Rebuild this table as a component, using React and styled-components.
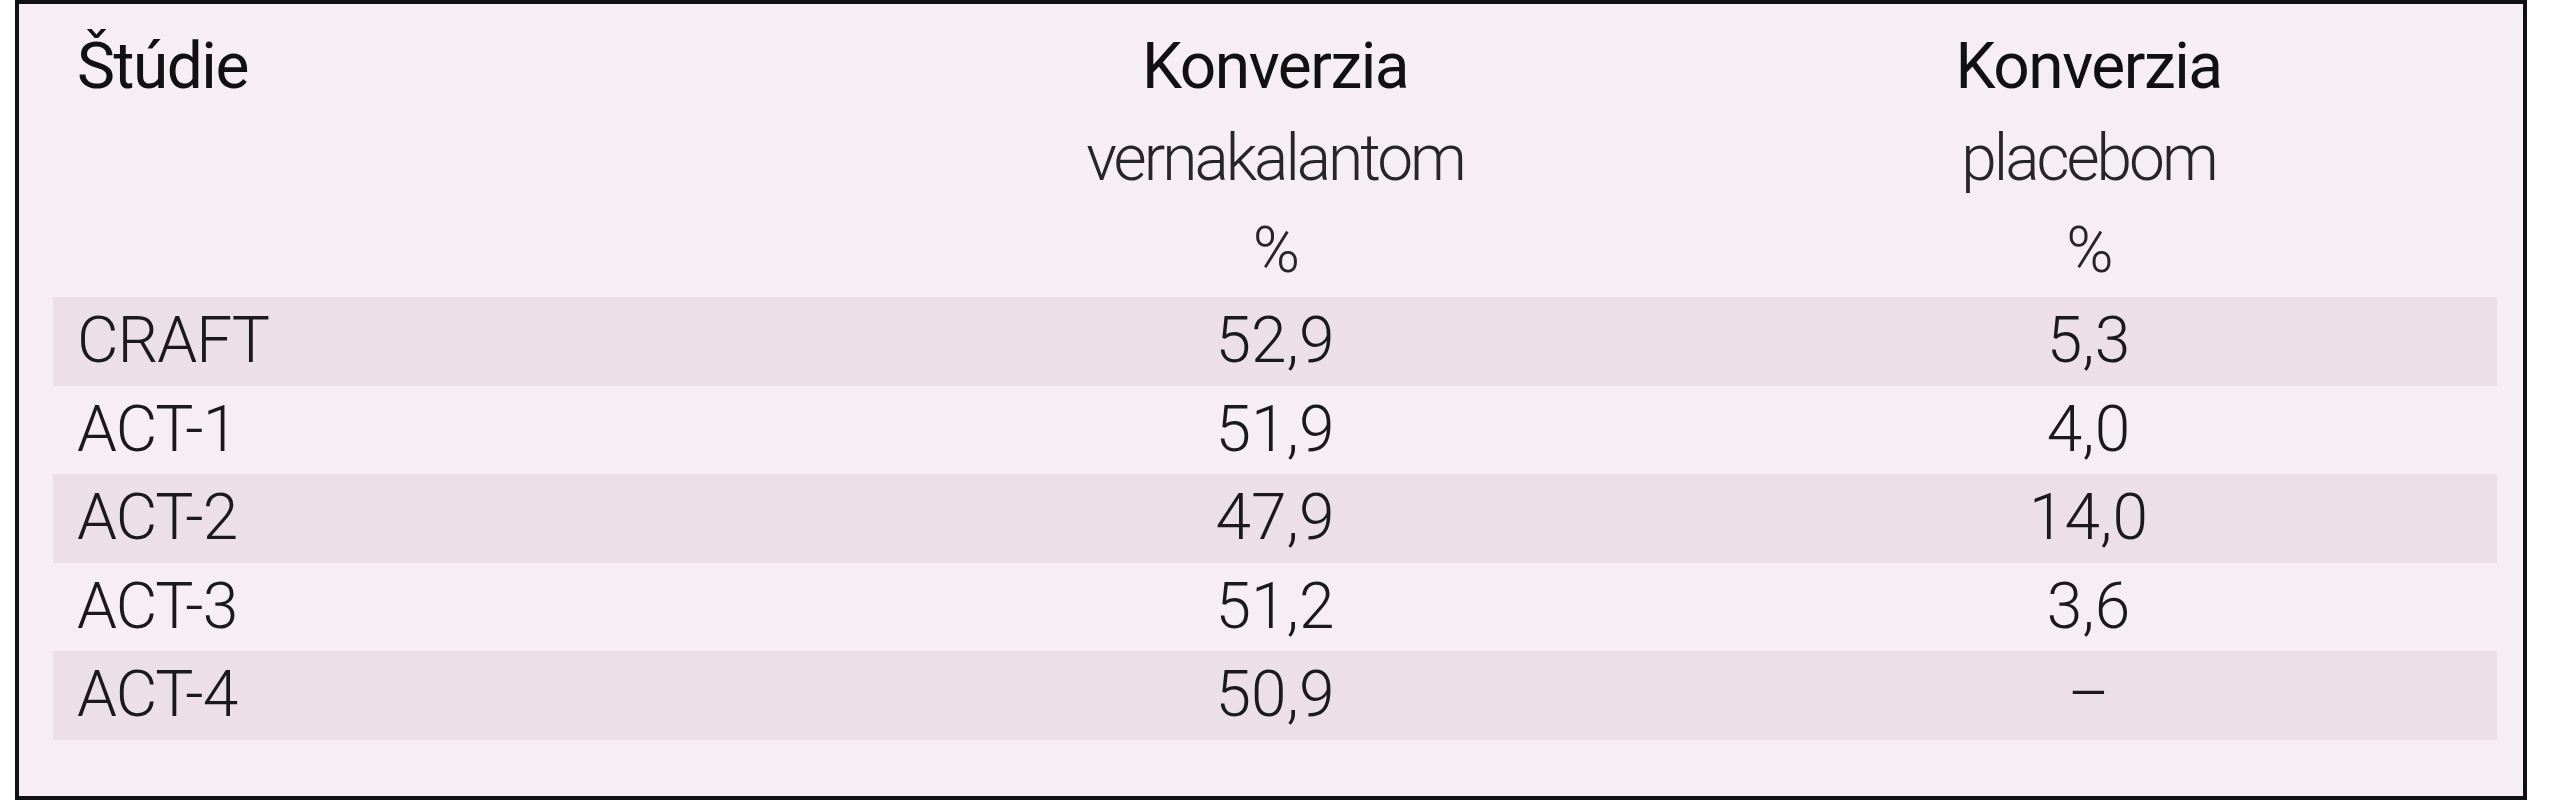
import React from "react";
import styled, { createGlobalStyle } from "styled-components";

const GlobalStyle = createGlobalStyle`
  html, body {
    margin: 0;
    padding: 0;
    background: #ffffff;
  }
  body {
    font-family: Roboto, "Liberation Sans", Arial, sans-serif;
  }
`;

const rows = [
  { study: "CRAFT", drug: "52,9", placebo: "5,3" },
  { study: "ACT-1", drug: "51,9", placebo: "4,0" },
  { study: "ACT-2", drug: "47,9", placebo: "14,0" },
  { study: "ACT-3", drug: "51,2", placebo: "3,6" },
  { study: "ACT-4", drug: "50,9", placebo: "–" },
];

function App() {
  return (
    <>
      <GlobalStyle />
      <Frame>
        <Table>
          <Header>
            <HeadCell>
              <Title>Štúdie</Title>
            </HeadCell>
            <HeadCell $center>
              <Title>Konverzia</Title>
              <Sub>vernakalantom</Sub>
              <Sub>%</Sub>
            </HeadCell>
            <HeadCell $center>
              <Title>Konverzia</Title>
              <Sub>placebom</Sub>
              <Sub>%</Sub>
            </HeadCell>
          </Header>
          {rows.map((r, i) => (
            <Row key={r.study} $striped={i % 2 === 0}>
              <Cell $name>{r.study}</Cell>
              <Cell $center>{r.drug}</Cell>
              <Cell $center>{r.placebo}</Cell>
            </Row>
          ))}
        </Table>
      </Frame>
    </>
  );
}

export default App;

const Frame = styled.div`
  box-sizing: border-box;
  margin-left: 15px;
  width: 2512px;
  height: 800px;
  border: 4px solid #111;
  background: #f7eef3;
  padding: 17px 26px 0 34px;
`;

const Table = styled.div`
  display: flex;
  flex-direction: column;
`;

const Header = styled.div`
  display: grid;
  grid-template-columns: 817px 810px 817px;
`;

const HeadCell = styled.div`
  display: flex;
  flex-direction: column;
  align-items: ${(p) => (p.$center ? "center" : "flex-start")};
  padding-left: ${(p) => (p.$center ? "0" : "24px")};
  font-size: 64px;
  line-height: 92px;
`;

const Title = styled.span`
  color: #111;
  font-weight: 400;
  letter-spacing: -1.5px;
`;

const Sub = styled.span`
  color: #262626;
  font-weight: 300;
  letter-spacing: -3px;
`;

const Row = styled.div`
  display: grid;
  grid-template-columns: 817px 810px 817px;
  height: 88.6px;
  background: ${(p) => (p.$striped ? "#ecdfe6" : "transparent")};
`;

const Cell = styled.div`
  display: flex;
  align-items: center;
  justify-content: ${(p) => (p.$center ? "center" : "flex-start")};
  padding-left: ${(p) => (p.$center ? "0" : "24px")};
  font-size: 64px;
  font-weight: 300;
  line-height: 88.6px;
  letter-spacing: ${(p) => (p.$name ? "-1px" : "0")};
  color: #1a1a1a;
`;
